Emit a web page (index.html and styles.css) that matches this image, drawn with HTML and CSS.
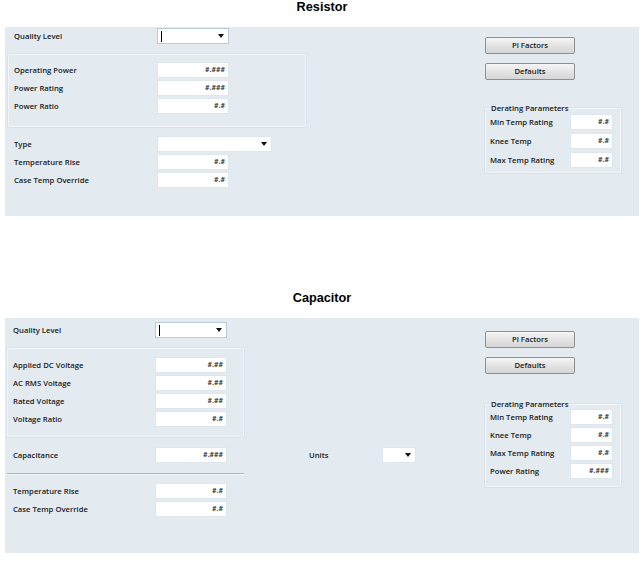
FILE: index.html
```html
<!DOCTYPE html>
<html>
<head>
<meta charset="utf-8">
<link rel="stylesheet" href="styles.css">
</head>
<body>
<section class="sec">
  <h2 class="title">Resistor</h2>
  <div class="panel panel-res">
    <div class="left">
      <div class="row"><label>Quality Level</label><div class="sel focus w72"><span class="caret"></span><span class="tri"></span></div></div>
      <div class="group">
        <div class="row"><label>Operating Power</label><div class="inp w72">#.###</div></div>
        <div class="row"><label>Power Rating</label><div class="inp w72">#.###</div></div>
        <div class="row"><label>Power Ratio</label><div class="inp w72">#.#</div></div>
      </div>
      <div class="rows">
        <div class="row"><label>Type</label><div class="sel w115"><span class="tri"></span></div></div>
        <div class="row"><label>Temperature Rise</label><div class="inp w72">#.#</div></div>
        <div class="row"><label>Case Temp Override</label><div class="inp w72">#.#</div></div>
      </div>
    </div>
    <div class="right">
      <button class="btn">Pi Factors</button>
      <button class="btn">Defaults</button>
      <fieldset class="derate">
        <legend>Derating Parameters</legend>
        <div class="row"><label>Min Temp Rating</label><div class="inp w43">#.#</div></div>
        <div class="row"><label>Knee Temp</label><div class="inp w43">#.#</div></div>
        <div class="row"><label>Max Temp Rating</label><div class="inp w43">#.#</div></div>
      </fieldset>
    </div>
  </div>
</section>

<section class="sec sec2">
  <h2 class="title">Capacitor</h2>
  <div class="panel panel-cap">
    <div class="left">
      <div class="row"><label>Quality Level</label><div class="sel focus w72"><span class="caret"></span><span class="tri"></span></div></div>
      <div class="group">
        <div class="row"><label>Applied DC Voltage</label><div class="inp w72">#.##</div></div>
        <div class="row"><label>AC RMS Voltage</label><div class="inp w72">#.##</div></div>
        <div class="row"><label>Rated Voltage</label><div class="inp w72">#.##</div></div>
        <div class="row"><label>Voltage Ratio</label><div class="inp w72">#.#</div></div>
      </div>
      <div class="row cap-row"><label>Capacitance</label><div class="inp w72">#.###</div><label class="units">Units</label><div class="sel w34"><span class="tri"></span></div></div>
      <div class="sep"></div>
      <div class="rows">
        <div class="row"><label>Temperature Rise</label><div class="inp w72">#.#</div></div>
        <div class="row"><label>Case Temp Override</label><div class="inp w72">#.#</div></div>
      </div>
    </div>
    <div class="right">
      <button class="btn">Pi Factors</button>
      <button class="btn">Defaults</button>
      <fieldset class="derate">
        <legend>Derating Parameters</legend>
        <div class="row"><label>Min Temp Rating</label><div class="inp w43">#.#</div></div>
        <div class="row"><label>Knee Temp</label><div class="inp w43">#.#</div></div>
        <div class="row"><label>Max Temp Rating</label><div class="inp w43">#.#</div></div>
        <div class="row"><label>Power Rating</label><div class="inp w43">#.###</div></div>
      </fieldset>
    </div>
  </div>
</section>
</body>
</html>
```

FILE: styles.css
```css
html, body {
  margin: 0;
  padding: 0;
  background: #ffffff;
}
body {
  width: 644px;
  font-family: "Open Sans", "Liberation Sans", sans-serif;
  font-size: 7.7px;
  font-weight: 600;
  color: #1a1a1a;
}
.sec2 { margin-top: 75px; }
.title {
  margin: 0 0 12px 0;
  height: 15px;
  line-height: 15px;
  font-family: "Liberation Sans", Arial, sans-serif;
  font-size: 12.7px;
  font-weight: 700;
  text-align: center;
  color: #000;
}
.panel {
  margin: 0 5px;
  background: #e3ebf1;
  display: grid;
  grid-template-columns: 480px 136px;
  align-items: start;
}
.panel-res { height: 189px; }
.panel-cap { height: 235px; }

.left { display: flex; flex-direction: column; }
.panel-res .left { padding: 1px 0 0 9px; }
.panel-cap .left { padding: 4px 0 0 8px; }

.row {
  display: flex;
  align-items: center;
  height: 16px;
}
.left .row label { width: 143px; }
.panel-cap .left .row label { width: 142px; }

.group {
  margin: 10px 0 0 -6px;
  border: 1px solid #f3f6f9;
  box-shadow: 0 0 0 1px #d9e2ea;
  border-radius: 2px;
  display: flex;
  flex-direction: column;
  gap: 2px;
}
.panel-res .group { width: 298px; box-sizing: border-box; padding: 7px 0 12px 5px; }
.panel-cap .group { width: 237px; box-sizing: border-box; padding: 8px 0 9px 5px; }

.rows { display: flex; flex-direction: column; gap: 2px; }
.panel-res .rows { margin-top: 9px; }

.cap-row { margin-top: 10px; }
.panel-cap .left .cap-row label.units { width: 73px; margin-left: 82px; }

.sep {
  margin: 10px 0 8px -6px;
  width: 237px;
  height: 0;
  border-top: 1px solid #aab4be;
  border-bottom: 1px solid #f7f9fb;
}

.inp, .sel {
  box-sizing: border-box;
  height: 16px;
  background: #fff;
  border: 1px solid #dfe7ee;
}
.inp {
  text-align: right;
  padding-right: 3px;
  font-size: 7px;
  font-weight: 700;
  line-height: 14px;
  color: #3a3a3a;
}
.w72 { width: 72px; }
.w43 { width: 43px; }
.w115 { width: 115px; }
.w34 { width: 34px; }

.sel {
  display: flex;
  align-items: center;
  padding: 0 4px 0 3px;
}
.sel.focus { border-color: #b7cbdd; }
.caret {
  width: 1px;
  height: 11px;
  background: #000;
}
.tri {
  margin-left: auto;
  width: 0;
  height: 0;
  border-left: 3px solid transparent;
  border-right: 3px solid transparent;
  border-top: 4px solid #111;
}

.right { display: flex; flex-direction: column; }
.btn {
  display: block;
  box-sizing: border-box;
  width: 90px;
  height: 17px;
  padding: 0;
  border: 1px solid #8f8f8f;
  border-radius: 2px;
  background: linear-gradient(#f6f6f6, #e2e2e2 55%, #d6d6d6);
  font-family: "Open Sans", "Liberation Sans", sans-serif;
  font-size: 7.7px;
  font-weight: 600;
  color: #1a1a1a;
  line-height: 15px;
  text-align: center;
}
.panel-res .right { padding-top: 10px; }
.panel-cap .right { padding-top: 13px; }
.btn + .btn { margin-top: 9px; }

.derate {
  margin: 23px 0 0 0;
  min-inline-size: 0;
  width: 136px;
  box-sizing: border-box;
  border: 1px solid #f3f6f9;
  box-shadow: 0 0 0 1px #d9e2ea;
  border-radius: 2px;
  padding: 1px 6px 4px 4px;
  display: flex;
  flex-direction: column;
  gap: 3px;
}
.panel-cap .derate {
  margin-top: 25px;
  padding: 0 6px 7px 4px;
  gap: 2px;
}
.derate legend {
  padding: 0 1px;
  line-height: 10px;
  font-size: 7.7px;
}
.derate .row label { width: 80px; }
```
